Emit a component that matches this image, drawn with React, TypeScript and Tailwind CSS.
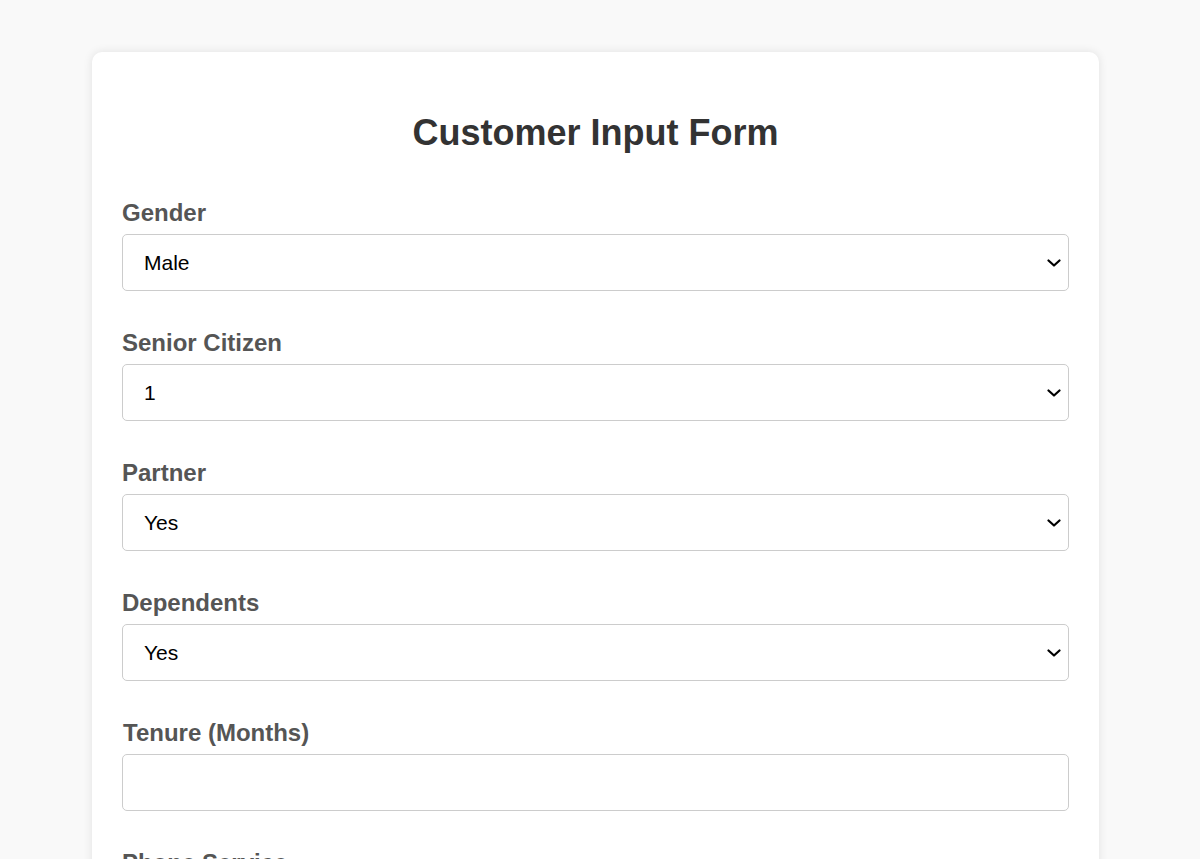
import { useState } from "react";

const selectFields = [
  { label: "Gender", options: ["Male", "Female"] },
  { label: "Senior Citizen", options: ["1", "0"] },
  { label: "Partner", options: ["Yes", "No"] },
  { label: "Dependents", options: ["Yes", "No"] },
];

const moreFields = [
  { label: "Phone Service", options: ["Yes", "No"] },
  { label: "Multiple Lines", options: ["Yes", "No", "No phone service"] },
  { label: "Internet Service", options: ["DSL", "Fiber optic", "No"] },
  { label: "Online Security", options: ["Yes", "No", "No internet service"] },
  { label: "Online Backup", options: ["Yes", "No", "No internet service"] },
  { label: "Device Protection", options: ["Yes", "No", "No internet service"] },
  { label: "Tech Support", options: ["Yes", "No", "No internet service"] },
  { label: "Streaming TV", options: ["Yes", "No", "No internet service"] },
  { label: "Streaming Movies", options: ["Yes", "No", "No internet service"] },
  { label: "Contract", options: ["Month-to-month", "One year", "Two year"] },
  { label: "Paperless Billing", options: ["Yes", "No"] },
  {
    label: "Payment Method",
    options: ["Electronic check", "Mailed check", "Bank transfer (automatic)", "Credit card (automatic)"],
  },
];

const fieldClass =
  "block w-full h-[57px] pl-[21px] pr-[30px] text-[21px] text-black bg-white border border-[#ccc] rounded-[5px] outline-none appearance-none";

const labelClass = "block text-[24px] leading-[28px] font-bold text-[#555] mb-[7px]";

function SelectField({ label, options }: { label: string; options: string[] }) {
  const [value, setValue] = useState(options[0]);
  return (
    <div className="mb-[38px]">
      <label className={labelClass}>{label}</label>
      <div className="relative">
        <select value={value} onChange={(e) => setValue(e.target.value)} className={fieldClass}>
          {options.map((o) => (
            <option key={o}>{o}</option>
          ))}
        </select>
        {/* chevron */}
        <svg
          className="pointer-events-none absolute right-[8px] top-[25px]"
          width="14"
          height="8"
          viewBox="0 0 14 8"
          fill="none"
        >
          <path d="M1.5 1.5l5.5 5 5.5-5" stroke="#000" strokeWidth="2.2" strokeLinecap="round" strokeLinejoin="round" />
        </svg>
      </div>
    </div>
  );
}

function InputField({ label }: { label: string }) {
  return (
    <div className="mb-[38px]">
      <label className={`${labelClass} pl-px`}>{label}</label>
      <input type="number" className={fieldClass} />
    </div>
  );
}

export default function App() {
  return (
    <div className="min-h-screen bg-[#f9f9f9] pt-[52px] pb-[50px] font-['Liberation_Sans',Arial,sans-serif]">
      <div className="ml-[92px] w-[1007px] bg-white rounded-[10px] shadow-[0_0_10px_rgba(0,0,0,0.1)] px-[30px] pt-[60px] pb-[30px]">
        <h1 className="text-center text-[36px] leading-[41px] font-bold text-[#333] mb-[46px]">
          Customer Input Form
        </h1>
        <form onSubmit={(e) => e.preventDefault()}>
          {selectFields.map((f) => (
            <SelectField key={f.label} {...f} />
          ))}
          <InputField label="Tenure (Months)" />
          {moreFields.map((f) => (
            <SelectField key={f.label} {...f} />
          ))}
          <InputField label="Monthly Charges" />
          <InputField label="Total Charges" />
          <button
            type="submit"
            className="w-full h-[57px] bg-[#4CAF50] text-white text-[21px] font-bold rounded-[5px]"
          >
            Predict
          </button>
        </form>
      </div>
    </div>
  );
}
